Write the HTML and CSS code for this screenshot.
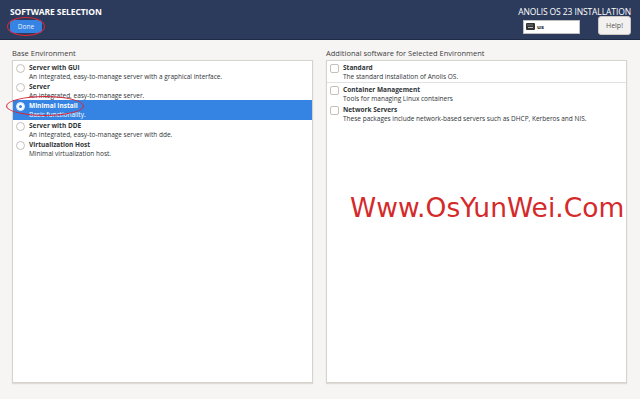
FILE: index.html
```html
<!DOCTYPE html>
<html lang="en">
<head>
    <meta charset="UTF-8">
    <title>Software Selection</title>
    <link rel="stylesheet" href="styles.css">
</head>
<body>
    <div class="header">
        <div class="header-left">
            <h1>SOFTWARE SELECTION</h1>
            <button class="done-btn">Done</button>
            <span class="mark mark-done"></span>
        </div>
        <div class="header-right">
            <div class="product">ANOLIS OS 23 INSTALLATION</div>
            <div class="header-tools">
                <div class="keyboard">
                    <svg width="9" height="7" viewBox="0 0 9 7"><rect x="0" y="0" width="9" height="7" rx="1" fill="#333"/><rect x="1.5" y="1.5" width="1" height="1" fill="#bbb"/><rect x="3.5" y="1.5" width="1" height="1" fill="#bbb"/><rect x="5.5" y="1.5" width="1" height="1" fill="#bbb"/><rect x="2" y="4" width="5" height="1" fill="#bbb"/></svg>
                    <span>us</span>
                </div>
                <button class="help-btn">Help!</button>
            </div>
        </div>
    </div>

    <div class="content">
        <div class="column">
            <div class="column-title">Base Environment</div>
            <div class="panel">
                <div class="option">
                    <span class="radio"></span>
                    <div class="option-text">
                        <div class="option-name">Server with GUI</div>
                        <div class="option-desc">An integrated, easy-to-manage server with a graphical interface.</div>
                    </div>
                </div>
                <div class="option">
                    <span class="radio"></span>
                    <div class="option-text">
                        <div class="option-name">Server</div>
                        <div class="option-desc">An integrated, easy-to-manage server.</div>
                    </div>
                </div>
                <div class="option selected">
                    <span class="radio checked"></span>
                    <div class="option-text">
                        <div class="option-name">Minimal Install</div>
                        <div class="option-desc">Basic functionality.</div>
                    </div>
                    <span class="mark mark-minimal"></span>
                </div>
                <div class="option">
                    <span class="radio"></span>
                    <div class="option-text">
                        <div class="option-name">Server with DDE</div>
                        <div class="option-desc">An integrated, easy-to-manage server with dde.</div>
                    </div>
                </div>
                <div class="option">
                    <span class="radio"></span>
                    <div class="option-text">
                        <div class="option-name">Virtualization Host</div>
                        <div class="option-desc">Minimal virtualization host.</div>
                    </div>
                </div>
            </div>
        </div>

        <div class="column">
            <div class="column-title">Additional software for Selected Environment</div>
            <div class="panel">
                <div class="option addon">
                    <span class="check"></span>
                    <div class="option-text">
                        <div class="option-name">Standard</div>
                        <div class="option-desc">The standard installation of Anolis OS.</div>
                    </div>
                </div>
                <div class="separator"></div>
                <div class="option addon">
                    <span class="check"></span>
                    <div class="option-text">
                        <div class="option-name">Container Management</div>
                        <div class="option-desc">Tools for managing Linux containers</div>
                    </div>
                </div>
                <div class="option addon">
                    <span class="check"></span>
                    <div class="option-text">
                        <div class="option-name">Network Servers</div>
                        <div class="option-desc">These packages include network-based servers such as DHCP, Kerberos and NIS.</div>
                    </div>
                </div>
                <div class="watermark">Www.OsYunWei.Com</div>
            </div>
        </div>
    </div>
</body>
</html>
```

FILE: styles.css
```css
body {
    margin: 0;
    width: 640px;
    height: 399px;
    background-color: #f6f5f4;
    font-family: "Open Sans", "DejaVu Sans", sans-serif;
    color: #2e3436;
    overflow: hidden;
}

.header {
    height: 39px;
    background-color: #2c3b5c;
    border-bottom: 1px solid #1f2a44;
    display: flex;
    justify-content: space-between;
    padding: 0 9px 0 10px;
}

.header-left {
    position: relative;
    padding-top: 6px;
}

.header-left h1 {
    margin: 0;
    font-size: 8.5px;
    font-weight: bold;
    color: #ffffff;
    letter-spacing: -0.1px;
}

.done-btn {
    display: block;
    margin-top: 3px;
    width: 32px;
    height: 13px;
    padding: 0;
    border: none;
    border-radius: 3px;
    background-color: #3584e4;
    color: #e8f0ff;
    font-family: inherit;
    font-size: 6.5px;
}

.header-right {
    display: flex;
    flex-direction: column;
    align-items: flex-end;
    padding-top: 6px;
}

.product {
    font-size: 8.5px;
    color: #ffffff;
    letter-spacing: -0.1px;
}

.header-tools {
    display: flex;
    align-items: center;
    gap: 18px;
    margin-top: -1px;
}

.keyboard {
    width: 53px;
    height: 12px;
    margin-top: 2px;
    background-color: #ffffff;
    border: 1px solid #c0c0c0;
    display: flex;
    align-items: center;
    gap: 2px;
    padding-left: 2px;
    font-size: 6px;
    font-weight: bold;
    color: #222;
}

.help-btn {
    width: 33px;
    height: 19px;
    padding: 0;
    border: 1px solid #cdc7c2;
    border-radius: 3px;
    background-color: #f2f1f0;
    color: #555;
    font-family: inherit;
    font-size: 7px;
}

.content {
    display: flex;
    gap: 13px;
    padding: 7px 13px 0 12px;
}

.column {
    flex: 1;
    display: flex;
    flex-direction: column;
}

.column-title {
    font-size: 7.5px;
    color: #3d3d3d;
    height: 13px;
    line-height: 13px;
}

.panel {
    position: relative;
    height: 320px;
    background-color: #ffffff;
    border: 1px solid #d6d3cf;
    box-shadow: 0 1px 1px #dedbd7;
    padding-top: 1px;
}

.option {
    position: relative;
    display: flex;
    align-items: flex-start;
    gap: 4px;
    padding: 1px 2px 1px 3px;
    height: 17px;
}

.option.selected {
    background-color: #3584e4;
    color: #ffffff;
    height: 18px;
    padding-top: 1px;
}

.option-name {
    font-size: 6.5px;
    font-weight: bold;
    line-height: 9px;
}

.option-desc {
    font-size: 6.5px;
    line-height: 9px;
}

.radio {
    width: 7px;
    height: 7px;
    margin-top: 1px;
    border: 1px solid #c4c0bb;
    border-radius: 50%;
    background-color: #ffffff;
    flex-shrink: 0;
}

.radio.checked {
    border-color: #ffffff;
    background-color: #3584e4;
    box-shadow: inset 0 0 0 2px #ffffff;
}

.addon {
    height: 18px;
}

.check {
    width: 7px;
    height: 7px;
    margin-top: 1px;
    border: 1px solid #c4c0bb;
    border-radius: 2px;
    background-color: #ffffff;
    flex-shrink: 0;
}

.separator {
    height: 1px;
    background-color: #e4e2df;
    margin: 0 0 1px;
}

.mark {
    position: absolute;
    border: 1.5px solid #d8283a;
    border-radius: 50%;
}

.mark-done {
    left: -3px;
    top: 17px;
    width: 36px;
    height: 17px;
}

.mark-minimal {
    left: -7px;
    top: -4px;
    width: 76px;
    height: 18px;
}

.watermark {
    position: absolute;
    left: 23px;
    top: 131px;
    font-family: "DejaVu Sans", Verdana, sans-serif;
    font-size: 26.5px;
    color: #d42a2a;
    white-space: nowrap;
}
```
